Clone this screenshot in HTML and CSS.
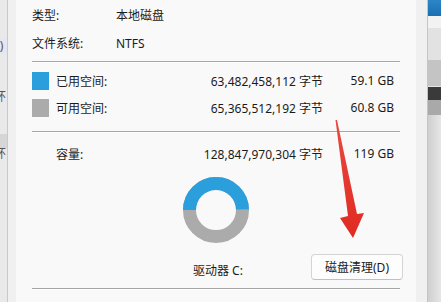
FILE: index.html
```
<!DOCTYPE html>
<html lang="zh-CN">
<head>
    <meta charset="UTF-8">
    <meta name="viewport" content="width=device-width, initial-scale=1.0">
    <title>本地磁盘 (C:) 属性</title>
    <link rel="stylesheet" href="styles.css">
</head>
<body>
<div class="behind-left">
    <div class="frag frag-zero">0)</div>
    <div class="frag frag-a">环</div>
    <div class="shade"></div>
    <div class="frag frag-b">环</div>
</div>
<div class="frame-left"></div>

<div class="dialog">
    <div class="info-row">
        <span class="info-label">类型:</span>
        <span>本地磁盘</span>
    </div>
    <div class="info-row">
        <span class="info-label">文件系统:</span>
        <span>NTFS</span>
    </div>

    <div class="sep sep-first"></div>

    <div class="space-row">
        <span class="swatch used"></span>
        <span class="space-label">已用空间:</span>
        <span class="bytes">63,482,458,112 字节</span>
        <span class="size">59.1 GB</span>
    </div>
    <div class="space-row">
        <span class="swatch free"></span>
        <span class="space-label">可用空间:</span>
        <span class="bytes">65,365,512,192 字节</span>
        <span class="size">60.8 GB</span>
    </div>

    <div class="sep sep-second"></div>

    <div class="space-row total">
        <span class="swatch blank"></span>
        <span class="space-label">容量:</span>
        <span class="bytes">128,847,970,304 字节</span>
        <span class="size">119 GB</span>
    </div>

    <div class="chart">
        <svg width="66" height="66" viewBox="0 0 66 66">
            <circle cx="33" cy="33" r="26.5" fill="none" stroke="#ababab" stroke-width="13"/>
            <circle cx="33" cy="33" r="26.5" fill="none" stroke="#2a9fdc" stroke-width="13"
                    stroke-dasharray="82.1 200" transform="rotate(180 33 33)"/>
        </svg>
    </div>

    <div class="drive-row">
        <span class="drive-name">驱动器 C:</span>
        <button class="cleanup">磁盘清理(D)</button>
    </div>

    <div class="sep sep-bottom"></div>

    <!-- red arrow drawn over the dialog -->
    <svg class="arrow" width="400" height="302" viewBox="16 0 400 302">
        <defs>
            <linearGradient id="arrowFill" x1="0" y1="0" x2="0" y2="1">
                <stop offset="0" stop-color="#e84a3f"/>
                <stop offset="1" stop-color="#e02a22"/>
            </linearGradient>
        </defs>
        <polygon fill="url(#arrowFill)"
                 points="335.5,120 337,120 357,214 364,213 353,238 340,218 348,216"/>
    </svg>
</div>

<div class="frame-right"></div>
<div class="behind-right">
    <div class="band band-blue"></div>
    <div class="band band-light"></div>
    <div class="band band-mid"></div>
    <div class="band band-gray"></div>
    <div class="band band-dark"></div>
    <div class="band band-steel"></div>
    <div class="band band-rest"></div>
</div>
</body>
</html>
```

FILE: styles.css
```
body {
    margin: 0;
    height: 302px;
    overflow: hidden;
    display: flex;
    font-family: "Noto Sans", "Noto Sans CJK SC", sans-serif;
    font-size: 12px;
    color: #1b1b1b;
    background-color: #f0f0f0;
}

/* window behind, left side */
.behind-left {
    width: 7px;
    overflow: hidden;
    background-color: #e9e9e9;
    border-right: 1px solid #c9c9c9;
    color: #555;
}
.frag {
    white-space: nowrap;
    text-indent: -6px;
    line-height: 16px;
}
.frag-zero {
    margin-top: 38px;
    background-color: #e6e6f0;
    text-indent: -7px;
}
.frag-a {
    margin-top: 35px;
}
.shade {
    margin-top: 29px;
    height: 14px;
    background-color: #d6d6d6;
}
.frag-b {
    margin-top: -2px;
}
.frame-left {
    width: 8px;
    background-color: #f0f0f0;
}

/* properties dialog */
.dialog {
    position: relative;
    width: 368px;
    padding: 1px 16px 0;
    background-color: #f9f9f9;
}
.info-row {
    display: flex;
    align-items: center;
    height: 28px;
}
.info-label {
    width: 84px;
}
.sep {
    border-top: 1px solid #a6a6a6;
    border-bottom: 1px solid #ffffff;
}
.sep-first {
    margin-top: 4px;
}
.sep-second {
    margin-top: 10px;
}
.sep-bottom {
    margin-top: 7px;
}
.space-row {
    display: flex;
    align-items: center;
    height: 27px;
}
.sep-first + .space-row {
    margin-top: 4px;
}
.space-row.total {
    margin-top: 7px;
}
.swatch {
    width: 17px;
    height: 18px;
    margin-right: 7px;
}
.swatch.used {
    background-color: #2a9fdc;
}
.swatch.free {
    background-color: #ababab;
}
.space-label {
    flex: 1;
}
.bytes {
    margin-right: 0;
}
.size {
    width: 71px;
    padding-right: 6px;
    text-align: right;
}

.chart {
    display: flex;
    justify-content: center;
    margin-top: 10px;
}
.chart svg {
    display: block;
}

.drive-row {
    display: flex;
    align-items: center;
    margin-top: 10px;
    height: 28px;
}
.drive-name {
    margin-left: 161px;
    margin-top: 6px;
}
.cleanup {
    margin-left: auto;
    margin-right: -3px;
    width: 92px;
    height: 26px;
    padding: 0;
    font-family: inherit;
    font-size: 12px;
    color: #1b1b1b;
    background-color: #fdfdfd;
    border: 1px solid #d4d4d4;
    border-bottom-color: #c0c0c0;
    border-radius: 4px;
}

.arrow {
    position: absolute;
    left: 0;
    top: 0;
    pointer-events: none;
}

/* frame and window behind, right side */
.frame-right {
    width: 11px;
    background-color: #f0f0f0;
    border-right: 1px solid #c4c4c4;
}
.behind-right {
    flex: 1;
    display: flex;
    flex-direction: column;
}
.band-blue {
    height: 16px;
    background: linear-gradient(#2b86c8, #1a6fb0);
}
.band-light {
    height: 12px;
    background-color: #f2f2f2;
}
.band-mid {
    height: 32px;
    background-color: #e2e2e2;
}
.band-gray {
    height: 26px;
    background-color: #c4c4c4;
    border-bottom: 1px solid #e6e6e6;
}
.band-dark {
    height: 13px;
    background-color: #3a3a3a;
}
.band-steel {
    height: 15px;
    background-color: #a9a9a9;
}
.band-rest {
    flex: 1;
    background: linear-gradient(90deg, #cfcfcf, #e6e6e6);
}
```
